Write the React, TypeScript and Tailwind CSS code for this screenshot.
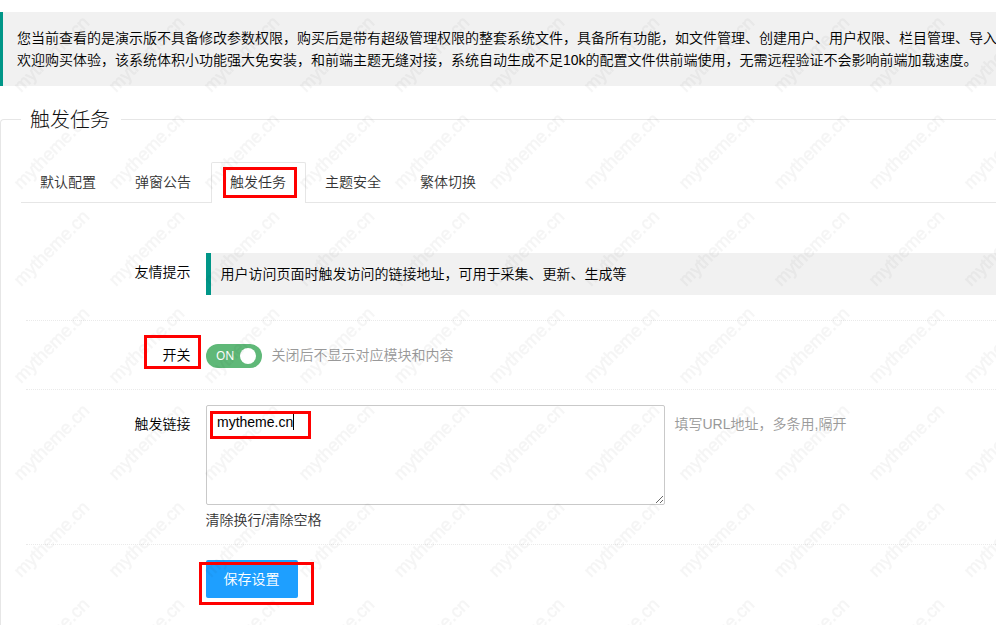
import React from "react";

const TABS = ["默认配置", "弹窗公告", "触发任务", "主题安全", "繁体切换"];
const ACTIVE_TAB = "触发任务";

const Highlight = ({ className }: { className: string }) => (
  <span className={`pointer-events-none absolute z-30 border-[3px] border-[#ff0000] ${className}`} />
);

const Watermark = () => (
  <svg className="pointer-events-none absolute inset-0 z-20 h-full w-full" aria-hidden="true">
    <defs>
      <pattern id="watermark" x="4" y="6" width="95" height="97" patternUnits="userSpaceOnUse">
        <g opacity="0.04">
          <text
            x="47.5"
            y="48"
            transform="rotate(-45 47.5 48)"
            textAnchor="middle"
            dominantBaseline="central"
            fontSize="18"
            fontFamily="Liberation Sans, sans-serif"
            fill="#000"
            stroke="#000"
            strokeWidth="0.5"
          >
            mytheme.cn
          </text>
        </g>
      </pattern>
    </defs>
    <rect width="100%" height="100%" fill="url(#watermark)" />
  </svg>
);

const FormRow = ({
  label,
  className,
  marked,
  children,
}: {
  label: string;
  className: string;
  marked?: boolean;
  children: React.ReactNode;
}) => (
  <div className={`ml-[25px] flex items-start ${className}`}>
    <label className="relative h-[38px] w-[180px] shrink-0 pr-[15.5px] text-right leading-[38px] text-black">
      {label}
      {marked && <Highlight className="-top-px left-[118px] h-[34px] w-[57px]" />}
    </label>
    {children}
  </div>
);

const App = () => {
  return (
    <div className="relative h-[625px] w-full overflow-hidden bg-white pt-3 font-['Liberation_Sans','Noto_Sans_CJK_SC',sans-serif] text-sm font-[350] text-[#333]">
      <blockquote className="h-[74px] border-l-[3px] border-[#009688] bg-[#f1f1f1] py-[15px] pl-3.5 leading-[22px] whitespace-nowrap text-black">
        <p>
          您当前查看的是演示版不具备修改参数权限，购买后是带有超级管理权限的整套系统文件，具备所有功能，如文件管理、创建用户、用户权限、栏目管理、导入
        </p>
        <p>
          欢迎购买体验，该系统体积小功能强大免安装，和前端主题无缝对接，系统自动生成不足10k的配置文件供前端使用，无需远程验证不会影响前端加载速度。
        </p>
      </blockquote>

      <fieldset className="mt-[18px] h-[530px] rounded-tl-sm border border-r-0 border-[#e6e6e6]">
        <legend className="ml-5 h-[31px] pr-[11px] pl-[9px] text-xl leading-[33px] font-light text-[#111]">触发任务</legend>

        <ul className="mt-[27px] ml-5 flex h-[41px] border-b border-[#e6e6e6]">
          {TABS.map((tab) =>
            tab === ACTIVE_TAB ? (
              <li
                key={tab}
                className="relative h-[41px] w-[95px] rounded-t-xs border border-b-0 border-[#e6e6e6] bg-white pr-px text-center leading-[39px]"
              >
                {tab}
                <Highlight className="top-1 left-[11px] h-[31px] w-[74px]" />
              </li>
            ) : (
              <li key={tab} className="w-[95px] pr-px text-center leading-10">
                {tab}
              </li>
            )
          )}
        </ul>

        <form className="pt-[50px]">
          <FormRow label="友情提示" className="border-b border-dotted border-[#eaeaea] pb-[25px]">
            <div className="h-[42px] grow border-l-5 border-[#009688] bg-[#f1f1f1] pl-[9.5px] leading-[42px] text-black">
              用户访问页面时触发访问的链接地址，可用于采集、更新、生成等
            </div>
          </FormRow>

          <FormRow label="开关" marked className="border-b border-dotted border-[#eaeaea] py-[15px]">
            <div className="mt-2 flex h-6 w-14 items-center justify-between rounded-full bg-[#5fb878] pr-1.5 pl-2.5 font-['Noto_Sans',sans-serif] text-xs font-normal text-white">
              <span>ON</span>
              <i className="size-4 rounded-full bg-white" />
            </div>
            <span className="ml-[9.5px] leading-[38px] text-[#999]">关闭后不显示对应模块和内容</span>
          </FormRow>

          <FormRow label="触发链接" className="border-b border-dotted border-[#eaeaea] pt-[15px] pb-[9px]">
            <div className="w-[459px]">
              <div className="relative h-[100px]">
                <textarea
                  className="block h-[100px] w-full resize rounded-xs border border-[#c9c9c9] bg-white px-2.5 py-1.5 leading-5 text-black outline-none"
                  defaultValue="mytheme.cn"
                  spellCheck={false}
                />
                <span className="absolute top-[9px] left-[87px] h-4 w-px bg-black" />
                <Highlight className="top-1.5 left-1 h-7 w-[101px]" />
              </div>
              <p className="-ml-[0.5px] h-[30px] leading-[30px]">清除换行/清除空格</p>
            </div>
            <span className="ml-[9.5px] leading-[38px] text-[#999]">填写URL地址，多条用,隔开</span>
          </FormRow>

          <FormRow label="" className="pt-[15px]">
            <div className="relative">
              <button
                type="button"
                className="block h-[38px] w-[92px] rounded-xs bg-[#1e9fff] pr-px text-center text-white"
              >
                保存设置
              </button>
              <Highlight className="top-0.5 -left-[7px] h-[43px] w-[115px]" />
            </div>
          </FormRow>
        </form>
      </fieldset>

      <Watermark />
    </div>
  );
};

export default App;
